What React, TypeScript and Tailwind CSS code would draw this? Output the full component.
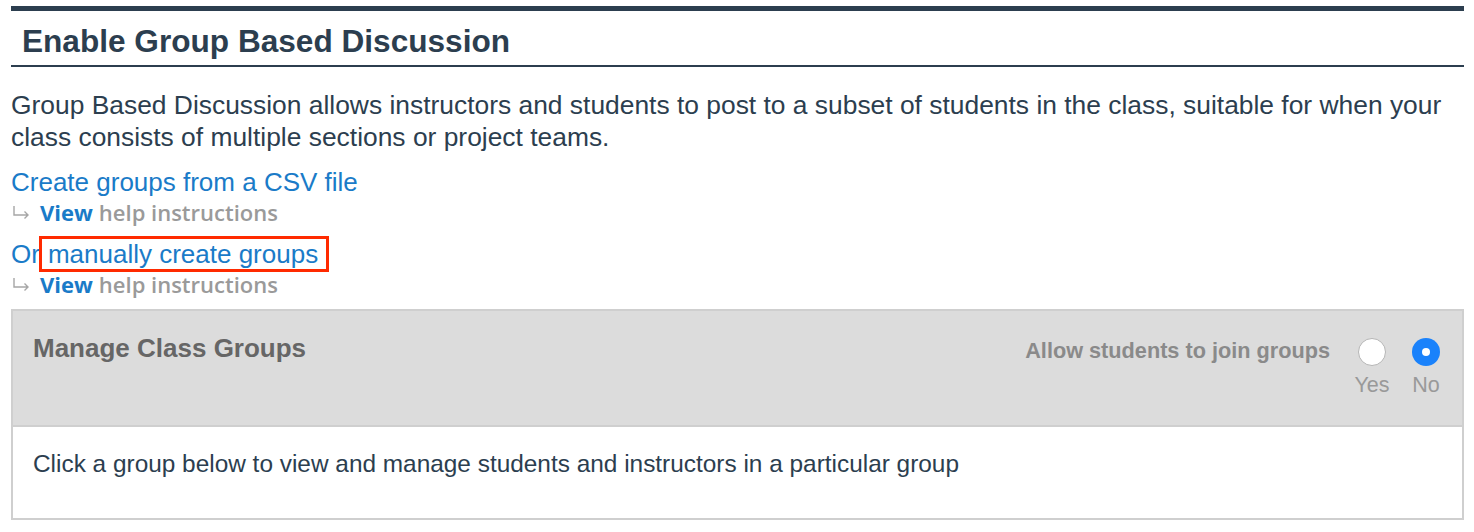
import React, { useState } from 'react';

const HelpLine: React.FC = () => (
  <div className="mt-[3px] flex h-[24px] items-center font-['Open_Sans',sans-serif] text-[22px] font-semibold leading-[24px] text-[#9a9a9a]">
    <svg width="29" height="24" viewBox="0 0 29 24" className="shrink-0">
      <path
        d="M3 6 V15 H17 M13.5 11.5 L17 15 L13.5 18.5"
        fill="none"
        stroke="#a6a6a6"
        strokeWidth="1.4"
      />
    </svg>
    <a href="#" className="font-bold text-[#1a7bc8]">View</a>
    <span className="ml-[6px]">help instructions</span>
  </div>
);

const App: React.FC = () => {
  const [allowJoin, setAllowJoin] = useState('no');

  return (
    <div className="min-h-[532px] bg-white px-[11px] pt-[6px] font-['Liberation_Sans',Arial,sans-serif] text-[#2c3e4f]">
      <div className="w-[1453px]">
        {/* Title */}
        <div className="border-t-[5px] border-b-2 border-[#2c3e4f] pb-[6px] pl-[11px] pt-[12px]">
          <h2 className="text-[31.6px] font-bold leading-[36px]">
            Enable Group Based Discussion
          </h2>
        </div>

        <p className="mt-[22px] text-[26.4px] leading-[32px]">
          Group Based Discussion allows instructors and students to post to a subset of students in the class, suitable for when your class consists of multiple sections or project teams.
        </p>

        {/* Links */}
        <div className="mt-[14px]">
          <a href="#" className="block text-[26px] leading-[30px] text-[#1a7bc8]">
            Create groups from a CSV file
          </a>
          <HelpLine />
        </div>

        <div className="mt-[15px]">
          <div className="flex h-[30px] items-center text-[26px] leading-[30px] text-[#1a7bc8]">
            <span>Or</span>
            <a
              href="#"
              className="-ml-[1px] border-[3px] border-[#ff2a00] pl-[6px] pr-[8px] leading-[30px]"
            >
              manually create groups
            </a>
          </div>
          <HelpLine />
        </div>

        {/* Manage Class Groups panel */}
        <div className="mt-[13px] border-2 border-[#cfcfcf]">
          <div className="flex h-[116px] items-start justify-between border-b-2 border-[#cfcfcf] bg-[#dcdcdc] pl-[20px] pr-[14px] pt-[22px]">
            <h3 className="text-[26px] font-bold leading-[30px] text-[#666]">
              Manage Class Groups
            </h3>
            <div className="flex items-start gap-[20px]">
              <span className="mt-[3px] text-[21.7px] font-bold leading-[30px] text-[#8a8a8a]">
                Allow students to join groups
              </span>
              <div className="flex gap-[10px]">
                {[
                  { key: 'yes', label: 'Yes' },
                  { key: 'no', label: 'No' }
                ].map((opt) => (
                  <label
                    key={opt.key}
                    className="flex w-[44px] cursor-pointer flex-col items-center"
                    onClick={() => setAllowJoin(opt.key)}
                  >
                    {allowJoin === opt.key ? (
                      <span className="mt-[5px] flex h-[28px] w-[28px] items-center justify-center rounded-full bg-[#1a82fb]">
                        <span className="h-[8px] w-[8px] rounded-full bg-white" />
                      </span>
                    ) : (
                      <span className="mt-[5px] h-[28px] w-[28px] rounded-full border border-[#b5b5b5] bg-white" />
                    )}
                    <span className="mt-[6px] text-[21.5px] leading-[26px] text-[#999]">
                      {opt.label}
                    </span>
                  </label>
                ))}
              </div>
            </div>
          </div>
          <div className="h-[91px] px-[20px] pt-[22px] text-[24.4px] leading-[30px]">
            Click a group below to view and manage students and instructors in a particular group
          </div>
        </div>
      </div>
    </div>
  );
};

export default App;
